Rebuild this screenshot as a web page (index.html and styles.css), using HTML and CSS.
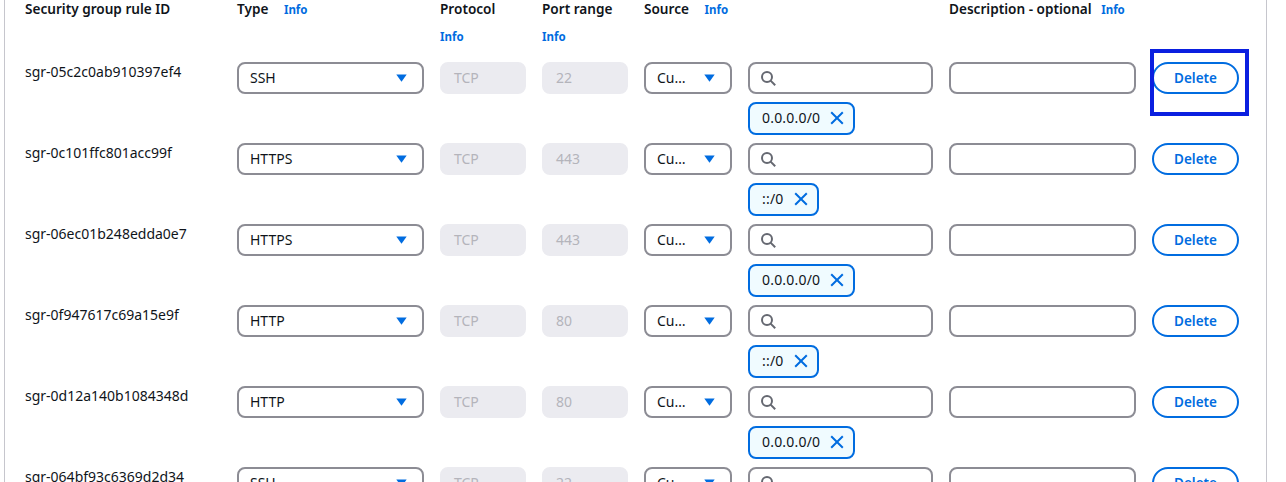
FILE: index.html
```html
<!DOCTYPE html>
<html lang="en">
<head>
<meta charset="utf-8">
<title>Inbound rules</title>
<link rel="stylesheet" href="styles.css">
</head>
<body>
<svg class="defs" width="0" height="0" aria-hidden="true">
  <symbol id="caret" viewBox="0 0 11 8"><path d="M0.3 0.5h10.4L5.5 7.8z"/></symbol>
  <symbol id="search" viewBox="0 0 15 15"><circle cx="6" cy="6" r="5"/><path d="M9.6 9.6l4.6 4.6"/></symbol>
  <symbol id="close" viewBox="0 0 14 14"><path d="M1.2 1.2l11.6 11.6M12.8 1.2L1.2 12.8"/></symbol>
</svg>
<main class="panel">
  <div class="grid header">
    <div class="head">Security group rule ID</div>
    <div class="head">Type <a class="info">Info</a></div>
    <div class="head head-wrap">Protocol <a class="info">Info</a></div>
    <div class="head head-wrap">Port range <a class="info">Info</a></div>
    <div class="head head-source">Source <a class="info">Info</a></div>
    <div class="head">Description - optional <a class="info info-tight">Info</a></div>
  </div>

  <div class="grid row">
    <div class="rule-id">sgr-05c2c0ab910397ef4</div>
    <div class="field select"><span>SSH</span><svg class="caret"><use href="#caret"/></svg></div>
    <div class="field disabled">TCP</div>
    <div class="field disabled">22</div>
    <div class="field select"><span>Cu…</span><svg class="caret"><use href="#caret"/></svg></div>
    <div class="cidr">
      <div class="field search"><svg class="search-icon"><use href="#search"/></svg></div>
      <div class="token">0.0.0.0/0<svg class="close"><use href="#close"/></svg></div>
    </div>
    <div class="field"></div>
    <div class="delete-cell"><button class="delete">Delete</button><div class="highlight"></div></div>
  </div>

  <div class="grid row">
    <div class="rule-id">sgr-0c101ffc801acc99f</div>
    <div class="field select"><span>HTTPS</span><svg class="caret"><use href="#caret"/></svg></div>
    <div class="field disabled">TCP</div>
    <div class="field disabled">443</div>
    <div class="field select"><span>Cu…</span><svg class="caret"><use href="#caret"/></svg></div>
    <div class="cidr">
      <div class="field search"><svg class="search-icon"><use href="#search"/></svg></div>
      <div class="token">::/0<svg class="close"><use href="#close"/></svg></div>
    </div>
    <div class="field"></div>
    <div class="delete-cell"><button class="delete">Delete</button></div>
  </div>

  <div class="grid row">
    <div class="rule-id">sgr-06ec01b248edda0e7</div>
    <div class="field select"><span>HTTPS</span><svg class="caret"><use href="#caret"/></svg></div>
    <div class="field disabled">TCP</div>
    <div class="field disabled">443</div>
    <div class="field select"><span>Cu…</span><svg class="caret"><use href="#caret"/></svg></div>
    <div class="cidr">
      <div class="field search"><svg class="search-icon"><use href="#search"/></svg></div>
      <div class="token">0.0.0.0/0<svg class="close"><use href="#close"/></svg></div>
    </div>
    <div class="field"></div>
    <div class="delete-cell"><button class="delete">Delete</button></div>
  </div>

  <div class="grid row">
    <div class="rule-id">sgr-0f947617c69a15e9f</div>
    <div class="field select"><span>HTTP</span><svg class="caret"><use href="#caret"/></svg></div>
    <div class="field disabled">TCP</div>
    <div class="field disabled">80</div>
    <div class="field select"><span>Cu…</span><svg class="caret"><use href="#caret"/></svg></div>
    <div class="cidr">
      <div class="field search"><svg class="search-icon"><use href="#search"/></svg></div>
      <div class="token">::/0<svg class="close"><use href="#close"/></svg></div>
    </div>
    <div class="field"></div>
    <div class="delete-cell"><button class="delete">Delete</button></div>
  </div>

  <div class="grid row">
    <div class="rule-id">sgr-0d12a140b1084348d</div>
    <div class="field select"><span>HTTP</span><svg class="caret"><use href="#caret"/></svg></div>
    <div class="field disabled">TCP</div>
    <div class="field disabled">80</div>
    <div class="field select"><span>Cu…</span><svg class="caret"><use href="#caret"/></svg></div>
    <div class="cidr">
      <div class="field search"><svg class="search-icon"><use href="#search"/></svg></div>
      <div class="token">0.0.0.0/0<svg class="close"><use href="#close"/></svg></div>
    </div>
    <div class="field"></div>
    <div class="delete-cell"><button class="delete">Delete</button></div>
  </div>

  <div class="grid row">
    <div class="rule-id">sgr-064bf93c6369d2d34</div>
    <div class="field select"><span>SSH</span><svg class="caret"><use href="#caret"/></svg></div>
    <div class="field disabled">TCP</div>
    <div class="field disabled">22</div>
    <div class="field select"><span>Cu…</span><svg class="caret"><use href="#caret"/></svg></div>
    <div class="cidr">
      <div class="field search"><svg class="search-icon"><use href="#search"/></svg></div>
    </div>
    <div class="field"></div>
    <div class="delete-cell"><button class="delete">Delete</button></div>
  </div>
</main>
</body>
</html>
```

FILE: styles.css
```css
* { box-sizing: border-box; }

html, body {
  margin: 0;
  height: 482px;
  overflow: hidden;
  background: #fff;
}

body {
  font-family: "Noto Sans", sans-serif;
  font-size: 14px;
  line-height: 20px;
  color: #0f141a;
}

.defs { position: absolute; }

.panel {
  width: 1263px;
  margin-left: 4px;
  height: 700px;
  border-left: 1px solid #c6c6cd;
  border-right: 1px solid #c6c6cd;
  padding-left: 20px;
}

.grid {
  display: grid;
  grid-template-columns: 196px 187px 86px 86px 88px 185px 187px 87px;
  column-gap: 16px;
}

.header {
  height: 62px;
  align-items: start;
}

.head {
  font-size: 13.6px;
  font-weight: 600;
  line-height: 17px;
}

.head-wrap .info {
  display: block;
  margin: 11px 0 0;
}

.head-source { grid-column: span 2; }

.info {
  font-size: 11.5px;
  font-weight: 700;
  color: #006ce0;
  margin-left: 12px;
}

.info-tight { margin-left: 6px; }

.row {
  height: 81px;
  align-items: start;
}

.rule-id {
  line-height: 20px;
  font-size: 14px;
}

.field {
  height: 32px;
  border: 2px solid #8c8c94;
  border-radius: 8px;
  background: #fff;
  display: flex;
  align-items: center;
  padding: 0 12px 0 11px;
  font-size: 14px;
  position: relative;
}

.select { justify-content: space-between; }

.select span { white-space: nowrap; }

.caret {
  width: 11px;
  height: 8px;
  fill: #006ce0;
  flex: none;
  margin-right: 3px;
}

.disabled {
  background: #ebebf0;
  border-color: #ebebf0;
  color: #b4b4bb;
  padding-left: 12px;
}

.search-icon {
  width: 15px;
  height: 15px;
  fill: none;
  stroke: #656871;
  stroke-width: 2;
}

.cidr {
  display: flex;
  flex-direction: column;
  gap: 8px;
  align-items: flex-start;
}

.cidr .field { width: 100%; }

.token {
  display: inline-flex;
  align-items: center;
  gap: 10px;
  height: 33px;
  padding: 0 9px 1px 12px;
  border: 2px solid #006ce0;
  border-radius: 8px;
  background: #f0fbff;
  font-size: 14px;
  letter-spacing: 0.2px;
  line-height: 18px;
}

.close {
  width: 14px;
  height: 14px;
  fill: none;
  stroke: #006ce0;
  stroke-width: 2;
}

.delete-cell { position: relative; }

.delete {
  display: block;
  width: 87px;
  height: 32px;
  padding: 0;
  border: 2px solid #006ce0;
  border-radius: 20px;
  background: #fff;
  color: #006ce0;
  font-family: inherit;
  font-size: 13.5px;
  font-weight: 600;
}

.highlight {
  position: absolute;
  left: -2px;
  top: -13px;
  width: 99px;
  height: 67px;
  border: 4px solid #0a1fe0;
  pointer-events: none;
}
```
